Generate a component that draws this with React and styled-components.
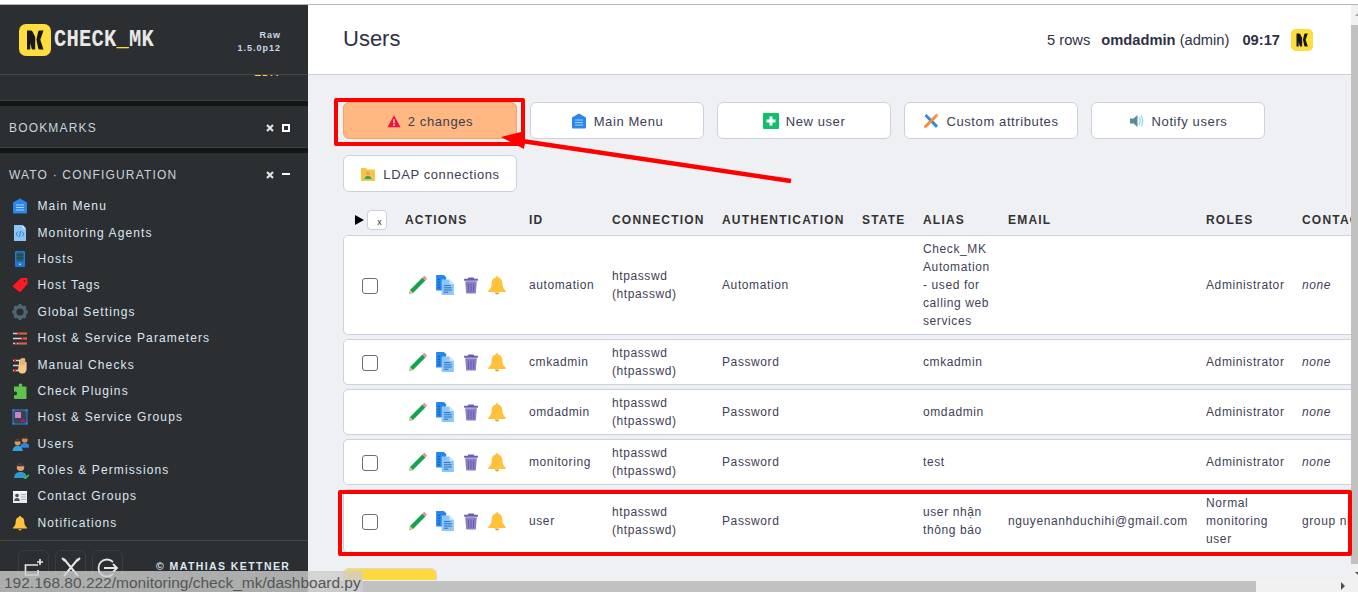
import React from 'react'
import styled, { createGlobalStyle } from 'styled-components'

const GlobalStyle = createGlobalStyle`
  html, body {
    margin: 0;
    padding: 0;
    overflow: hidden;
    background: #fff;
  }
  * { box-sizing: border-box; }
`

const Page = styled.div`
  position: relative;
  width: 1358px;
  height: 592px;
  overflow: hidden;
  display: flex;
  flex-direction: column;
  font-family: "Liberation Sans", Arial, sans-serif;
  background: #fff;
`

const TopEdge = styled.div`
  height: 5px;
  flex: none;
  border-bottom: 1px solid #b5b5b5;
  background: #fff;
`

const Body = styled.div`
  flex: 1;
  min-height: 0;
  display: flex;
`

/* sidebar */
const Sidebar = styled.aside`
  width: 308px;
  flex: none;
  display: flex;
  flex-direction: column;
  background: #2b2f31;
  color: #dfe7f0;
`

const Brand = styled.div`
  height: 70px;
  flex: none;
  display: flex;
  align-items: center;
  padding: 0 27px 0 19px;
  border-bottom: 1px solid #43484a;
`

const BrandName = styled.div`
  margin-left: 3px;
  font-family: "Liberation Mono", monospace;
  font-weight: 700;
  font-size: 20.5px;
  letter-spacing: 0.2px;
  color: #e8e8e8;
  transform: scaleY(1.15);
  span { color: #ffd83d; }
`

const Version = styled.div`
  margin-left: auto;
  padding-top: 4px;
  text-align: right;
  font-size: 9px;
  font-weight: 700;
  line-height: 13px;
  letter-spacing: 1px;
  color: #cdd8e4;
`

const SnapinTail = styled.div`
  height: 26px;
  flex: none;
  overflow: hidden;
  display: flex;
  justify-content: flex-end;
  padding-right: 27px;
  border-bottom: 1px solid #3b4042;
`

const EditLabel = styled.span`
  margin-top: -8px;
  height: 12px;
  font-size: 10px;
  font-weight: 700;
  letter-spacing: 1px;
  color: #ffd83d;
`

const Gap = styled.div`
  height: 5px;
  flex: none;
  background: #131617;
`

const SnapinHead = styled.div`
  height: ${p => p.$h}px;
  flex: none;
  display: flex;
  align-items: center;
  padding: ${p => p.$top}px 18px 0 9px;
  font-size: 12px;
  letter-spacing: 1.17px;
  color: #c9d4dd;
  border-bottom: ${p => (p.$line ? '1px solid #3b4042' : 'none')};
`

const HeadControls = styled.div`
  margin-left: auto;
  display: flex;
  align-items: center;
  gap: 8px;
`

const NavList = styled.div`
  display: flex;
  flex-direction: column;
`

const NavItem = styled.div`
  height: 26.4px;
  flex: none;
  display: flex;
  align-items: center;
  gap: 9.5px;
  padding-left: 12px;
  font-size: 12px;
  letter-spacing: 1.12px;
  color: #dde6f0;
`

const NavIcon = styled.span`
  width: 16px;
  flex: none;
  display: flex;
`

const Foot = styled.div`
  margin-top: 4px;
  flex: 1;
  min-height: 0;
  display: flex;
  gap: 6px;
  padding: 9px 18px 0;
  border-top: 1px solid #43484a;
`

const FootButton = styled.div`
  width: 31px;
  height: 36px;
  flex: none;
  display: flex;
  align-items: center;
  justify-content: center;
  border: 1px solid #383d3f;
  border-radius: 6px;
`

const Copyright = styled.div`
  margin-left: 27px;
  padding-top: 10px;
  font-size: 10.5px;
  font-weight: 700;
  letter-spacing: 1.42px;
  white-space: nowrap;
  color: #dfe7f0;
`

/* main */
const Main = styled.main`
  flex: 1;
  min-width: 0;
  display: flex;
  flex-direction: column;
`

const MainHead = styled.header`
  height: 70px;
  flex: none;
  display: flex;
  align-items: center;
  padding: 0 38px 0 35px;
  background: #fff;
  border-bottom: 1px solid #ccced9;
  color: #2f3147;
`

const Title = styled.h1`
  margin: 0 0 2px;
  font-size: 22px;
  font-weight: 400;
`

const HeadInfo = styled.div`
  margin-left: auto;
  display: flex;
  align-items: center;
  font-size: 14.7px;
  white-space: nowrap;
  b { font-weight: 700; }
`

const Rows = styled.span`
  margin-right: 11px;
`

const Clock = styled.b`
  margin: 0 11px 0 13px;
`

const Content = styled.div`
  flex: 1;
  min-height: 0;
  overflow: hidden;
  padding: 27px 0 0 35px;
  background: #eff0f3;
`

const Toolbar = styled.div`
  width: 935px;
  display: flex;
  flex-wrap: wrap;
  gap: 16px 13px;
`

const ToolButton = styled.div`
  width: 174px;
  height: 37px;
  display: flex;
  align-items: center;
  justify-content: center;
  gap: 7px;
  padding-top: 1px;
  font-size: 13px;
  letter-spacing: 0.6px;
  white-space: nowrap;
  color: #3c3e55;
  background: ${p => (p.$warn ? '#ffb881' : '#fff')};
  border: 1px solid ${p => (p.$warn ? '#f5a262' : '#cdd0e0')};
  border-radius: 6px;
`

const Table = styled.div`
  margin-top: 17px;
  width: 1059px;
  display: flex;
  flex-direction: column;
  gap: 4px;
`

const HeadRow = styled.div`
  height: 21px;
  display: grid;
  grid-template-columns: 62px 124px 83px 110px 140px 61px 85px 198px 96px 100px;
  align-items: center;
  margin-bottom: 1px;
  font-size: 12px;
  font-weight: 700;
  letter-spacing: 1.2px;
  color: #333;
`

const Expand = styled.div`
  display: flex;
  align-items: center;
  gap: 3px;
  padding-left: 12px;
`

const ClearBox = styled.div`
  width: 20px;
  height: 20px;
  display: flex;
  align-items: flex-end;
  justify-content: center;
  padding: 0 0 1px 5px;
  font-size: 9px;
  font-weight: 400;
  letter-spacing: 0;
  line-height: 12px;
  background: #fff;
  border: 1px solid #cdd0e0;
  border-radius: 4px;
`

const Row = styled.div`
  display: grid;
  grid-template-columns: 61px 124px 83px 110px 140px 61px 85px 198px 96px 100px;
  align-items: center;
  padding: 4px 0;
  font-size: 12px;
  line-height: 18px;
  letter-spacing: 0.6px;
  color: #3f4156;
  background: #fff;
  border: 1px solid #cdd0e0;
  border-radius: 5px;
`

const Cell = styled.div`
  padding-right: 12px;
  font-style: ${p => (p.$italic ? 'italic' : 'normal')};
  white-space: ${p => (p.$nowrap ? 'nowrap' : 'normal')};
`

const Check = styled.div`
  width: 16px;
  height: 16px;
  margin: 2px 0 0 18px;
  border: 1px solid #6d6d6d;
  border-radius: 3px;
  background: #fff;
`

const Actions = styled.div`
  display: flex;
  align-items: center;
  gap: 7px;
  padding-left: 3px;
`

const YellowButton = styled.div`
  margin-top: 15px;
  width: 94px;
  height: 40px;
  background: #ffd93f;
  border: 1px solid #d6d8e2;
  border-radius: 6px;
`

const HScroll = styled.div`
  height: 12px;
  flex: none;
  display: flex;
  align-items: center;
  background: #f1f1f1;
`

const HThumb = styled.div`
  width: 948px;
  height: 11px;
  background: #c1c1c1;
`

const ArrowRight = styled.div`
  margin-left: 85px;
  width: 0;
  height: 0;
  border-left: 4px solid #505050;
  border-top: 4px solid transparent;
  border-bottom: 4px solid transparent;
`

const VScroll = styled.div`
  width: 7px;
  flex: none;
  display: flex;
  flex-direction: column;
  align-items: flex-end;
  background: #f1f1f1;
`

const VArrow = styled.div`
  margin-top: ${p => p.$top}px;
  width: 0;
  height: 0;
  border-left: 3px solid transparent;
  border-right: 0 solid transparent;
  border-bottom: ${p => (p.$up ? '3px solid #a3a3a3' : '0 solid transparent')};
  border-top: ${p => (p.$up ? '0 solid transparent' : '3px solid #505050')};
`

const VThumb = styled.div`
  margin-top: 9px;
  width: 7px;
  height: 539px;
  background: #c1c1c1;
`

/* things lying over the page */
const StatusBubble = styled.div`
  position: absolute;
  left: 0;
  bottom: 0;
  height: 21px;
  padding: 0 2px 0 4px;
  font-size: 15.5px;
  line-height: 23px;
  white-space: nowrap;
  color: #555;
  background: rgba(205, 205, 205, 0.8);
  border-top-right-radius: 3px;
`

const RedBox = styled.div`
  position: absolute;
  left: ${p => p.$x}px;
  top: ${p => p.$y}px;
  width: ${p => p.$w}px;
  height: ${p => p.$h}px;
  border: 4px solid #fe0000;
  border-radius: 2px;
`

const ArrowLayer = styled.svg`
  position: absolute;
  left: 0;
  top: 0;
  pointer-events: none;
`

/* drawings */
const Mark = ({ size }) => (
  <svg width={size} height={size} viewBox="0 0 32 32">
    <rect width="32" height="32" rx="7" fill="#ffdd3f" />
    <path d="M8 6.500h3.600c1 0 1.600.4 2 1.300l2.600 5.200V25.500h-2.200c-.8 0-1.200-.4-1.400-1l-1.400-5.600V24.800c0 .4-.2.700-.6.700H8z" fill="#16181a" />
    <path d="M24.500 6.500h-3.800c-.8 0-1.200.4-1.500 1l-1.800 8.300 1.900 8.700c.2.700.7 1 1.400 1h3.800l-3.200-9.700z" fill="#16181a" />
  </svg>
)

const Ico = ({ size = 16, box = 16, children }) => (
  <svg width={size} height={size} viewBox={`0 0 ${box} ${box}`} style={{ flex: 'none' }}>{children}</svg>
)

const MenuIcon = () => (
  <Ico>
    <path d="M8 .5 15 4.500v9.500c0 1-.6 1.500-1.500 1.500h-11C1.600 15.500 1 15 1 14V4.500z" fill="#2b87ec" />
    <path d="M4 7h8M4 9.500h8M4 12h8" stroke="#a8d2fb" strokeWidth="1" />
  </Ico>
)

const AgentIcon = () => (
  <Ico>
    <path d="M2 0h8.500L14 3.500V16H2z" fill="#8cc4f8" />
    <path d="M10.500 0 14 3.500h-3.500z" fill="#d4e9fc" />
    <path d="M6 6.500 4 9l2 2.500M10 6.500 12 9l-2 2.500M8.700 6 7.300 12" stroke="#2f7fd6" strokeWidth="1" fill="none" />
  </Ico>
)

const HostIcon = () => (
  <Ico>
    <rect x="3" y="0" width="10" height="16" rx="1" fill="#1f79d8" />
    <rect x="4.500" y="1.500" width="7" height="9" fill="#2b5c6e" />
    <path d="M4.500 4h7M4.500 7h7" stroke="#1c3d4a" strokeWidth="1" />
    <circle cx="8" cy="13.300" r=".8" fill="#e7f2fd" />
  </Ico>
)

const TagIcon = () => (
  <Ico>
    <path d="M9 1h5.500c.6 0 1 .4 1 1v5l-6.800 7.800c-.4.400-1 .4-1.400 0L1 10c-.4-.4-.4-1 0-1.400z" fill="#fb1a26" />
    <circle cx="12.500" cy="4" r="1" fill="#8e0d14" />
  </Ico>
)

const GearIcon = () => (
  <Ico>
    <circle cx="8" cy="8" r="5.300" fill="none" stroke="#4e6772" strokeWidth="3.400" />
    <path d="M8 0v3M8 13v3M0 8h3M13 8h3M2.300 2.300l2.200 2.200M11.500 11.500l2.200 2.200M13.700 2.300l-2.200 2.200M4.500 11.500l-2.200 2.200" stroke="#4e6772" strokeWidth="2.600" />
  </Ico>
)

const SlidersIcon = () => (
  <Ico>
    <path d="M1 3.500h14M1 8.500h14M1 13.500h14" stroke="#d4d4d4" strokeWidth="1.500" />
    <path d="M7 3.500h8M11 8.500h4M6 13.500h9" stroke="#f0542c" strokeWidth="1.500" />
    <path d="M6.500 2v3M10.500 7v3M4 12v3" stroke="#d51f2c" strokeWidth="2" />
  </Ico>
)

const HandIcon = () => (
  <Ico size={18} box={18}>
    <path d="M1 4.500h8M1 9.500h8M1 14.500h8" stroke="#d4d4d4" strokeWidth="1.500" />
    <path d="M3 3v3M3 13v3" stroke="#d51f2c" strokeWidth="2" />
    <path d="M7 8.500V4.500c0-1 1.500-1 1.500 0V3c0-1 1.600-1 1.600 0v-.5c0-1 1.600-1 1.600 0v.6c0-1 1.500-1 1.500 0V6.500c0-.9 1.400-.9 1.400 0v6.500c0 2.500-1.500 4.500-4 4.500h-1c-2 0-3.600-2-3.600-4.500z" fill="#f7c68b" />
    <path d="M8.800 4.500v4.500M10.400 3.500v5.500M12 3.500v5.500" stroke="#cf9659" strokeWidth=".6" />
  </Ico>
)

const PuzzleIcon = () => (
  <Ico>
    <path d="M5 3.500h2c-.8-2 0-3 1.500-3S10.800 1.500 10 3.500h3.500c.6 0 1 .4 1 1V15c0 .6-.4 1-1 1H3c-.6 0-1-.4-1-1v-3c2 .8 3 0 3-1.500S4 8 2 8.800V4.500c0-.6.4-1 1-1z" fill="#61c34f" />
  </Ico>
)

const GroupsIcon = () => (
  <Ico>
    <rect x="1" y="1" width="14" height="14" fill="#3a4346" stroke="#2a6cb4" strokeWidth="1.400" />
    <rect x="3" y="3" width="6" height="6" fill="#cf7fd0" />
    <path d="M8 13h6l-3-4z" fill="#9a1c95" />
    <path d="M.5.500h2v2h-2zM13.500.500h2v2h-2zM.5 13.500h2v2h-2zM13.500 13.500h2v2h-2z" fill="#2f84e0" />
  </Ico>
)

const UsersIcon = () => (
  <Ico size={17}>
    <circle cx="12" cy="4.500" r="2.700" fill="#d98b4e" />
    <path d="M8.500 3.500c.5-2.500 6.500-2.500 7 0z" fill="#4b3527" />
    <path d="M7.500 12c0-3 2-4.500 4.500-4.500s4.500 1.500 4.500 4.500z" fill="#2b87d8" />
    <circle cx="5.300" cy="7" r="2.700" fill="#e09a5f" />
    <path d="M2 6c.5-2.500 6.500-2.500 7 0z" fill="#4b3527" />
    <path d="M.5 15c0-3 2-5 4.800-5s4.800 2 4.800 5z" fill="#30a2e6" />
  </Ico>
)

const RolesIcon = () => (
  <Ico size={17}>
    <circle cx="8" cy="5" r="3.500" fill="#e8a16a" />
    <path d="M4.300 4c.4-4 7-4 7.400 0z" fill="#3b3b3b" />
    <path d="M2 15c0-4 2.800-5.500 6-5.500s6 1.500 6 5.500z" fill="#2a9ad6" />
    <path d="M10.500 13.500l2 2 3.500-3.500" stroke="#3fb350" strokeWidth="1.600" fill="none" />
  </Ico>
)

const ContactIcon = () => (
  <Ico>
    <path d="M1 3h14v12H1z" fill="#e7ebee" />
    <path d="M1 3h14v1.500H1z" fill="#fff" />
    <circle cx="5" cy="7.500" r="1.800" fill="#4a4d50" />
    <path d="M2.300 13c0-2.200 1-3 2.700-3s2.700.8 2.700 3z" fill="#4a4d50" />
    <path d="M9 6.500h5M9 9h5M9 11.500h5" stroke="#aab4bc" strokeWidth="1" />
  </Ico>
)

const BellIcon = ({ size = 16 }) => (
  <Ico size={size}>
    <path d="M8 1c.7 0 1 .4 1 1 2.500.6 3.300 2.600 3.300 5 0 2.700 1 4 2.700 5.500V13.500H1v-1C2.700 11 3.700 9.700 3.700 7c0-2.400.8-4.400 3.300-5 0-.6.3-1 1-1z" fill="#ffc23a" />
    <path d="M6.300 14h3.400c-.2 1-.9 1.600-1.700 1.600s-1.500-.6-1.700-1.600z" fill="#e09a1f" />
  </Ico>
)

const PencilIcon = () => (
  <Ico size={20} box={18}>
    <path d="M1.800 13.500 13 2.300l2.700 2.700L4.500 16.200 1 17z" fill="#16a34f" />
    <path d="M13 2.300l1-1c.4-.4 1-.4 1.400 0l1.300 1.300c.4.4.4 1 0 1.400l-1 1z" fill="#ef8d9b" />
    <path d="M1.800 13.500l2.700 2.700L1 17z" fill="#e8c98d" />
  </Ico>
)

const CopyIcon = () => (
  <Ico size={20} box={18}>
    <path d="M1 0h7l2 2v12H1z" fill="#2487ea" />
    <path d="M6 4h7l4 4v10H6z" fill="#8dc7f7" />
    <path d="M13 4l4 4h-4z" fill="#cfe7fb" />
    <path d="M8 9.500h6M8 11.500h7M8 13.500h7M8 15.500h4" stroke="#2c6fc0" strokeWidth=".9" />
    <path d="M2.500 4h2M2.500 6.500h2M2.500 9h2M2.500 11.500h2" stroke="#0f5db3" strokeWidth=".9" />
  </Ico>
)

const TrashIcon = () => (
  <Ico size={18} box={17}>
    <path d="M6 1.500h5l.5 1H15V4.500H2V2.500h3.500z" fill="#6a5cb0" />
    <path d="M3 5h11l-1 11.500H4z" fill="#8a80c6" />
    <path d="M6 7v8M8.500 7v8M11 7v8" stroke="#6a5cb0" strokeWidth="1" />
  </Ico>
)

const WarnIcon = () => (
  <Ico size={14}>
    <path d="M8 1.500 15.500 15H.5z" fill="#f3123f" />
    <path d="M8 6v4.500M8 11.700v1.600" stroke="#fff" strokeWidth="1.500" />
  </Ico>
)

const PlusIcon = () => (
  <Ico>
    <rect width="16" height="16" rx="1" fill="#0cc169" />
    <path d="M8 3.500v9M3.500 8h9" stroke="#fff" strokeWidth="3" />
  </Ico>
)

const AttrIcon = () => (
  <Ico>
    <path d="M1.500 3 3.500 1 15 12.500 13 15z" fill="#2f8ae8" />
    <path d="M12.500 1.500 14.500 3.500 3.500 14.500 1 15l.5-2.500z" fill="#f58a31" />
    <path d="M12.500 1.500 13.500.5l2 2-1 1z" fill="#ef8d9b" />
  </Ico>
)

const SpeakerIcon = () => (
  <Ico>
    <path d="M1 5.500h3.500L8.500 2v12L4.500 10.500H1z" fill="#5e8a93" />
    <path d="M10 4c1.500 2.500 1.500 5.500 0 8M12 2.500c2.200 3.500 2.200 7.500 0 11" stroke="#8fd8f7" strokeWidth="1.400" fill="none" />
  </Ico>
)

const FolderIcon = () => (
  <Ico>
    <path d="M1 2h5l1.500 1.500H15V15H1z" fill="#f5c744" />
    <circle cx="8" cy="7.500" r="2" fill="#e8a16a" />
    <path d="M4.500 13c0-2 1.500-3 3.500-3s3.500 1 3.500 3z" fill="#2fa37c" />
  </Ico>
)

const CloseMark = () => (
  <svg width="8" height="8" viewBox="0 0 8 8">
    <path d="M1 1l6 6M7 1 1 7" stroke="#e2e2e2" strokeWidth="2.200" />
  </svg>
)

const BoxMark = () => (
  <svg width="8" height="8" viewBox="0 0 8 8">
    <rect x="1" y="1" width="6" height="6" fill="none" stroke="#fff" strokeWidth="2" />
  </svg>
)

const DashMark = () => (
  <svg width="8" height="8" viewBox="0 0 8 8">
    <rect y="2" width="8" height="2" fill="#fff" />
  </svg>
)

const navItems = [
  ['Main Menu', MenuIcon],
  ['Monitoring Agents', AgentIcon],
  ['Hosts', HostIcon],
  ['Host Tags', TagIcon],
  ['Global Settings', GearIcon],
  ['Host & Service Parameters', SlidersIcon],
  ['Manual Checks', HandIcon],
  ['Check Plugins', PuzzleIcon],
  ['Host & Service Groups', GroupsIcon],
  ['Users', UsersIcon],
  ['Roles & Permissions', RolesIcon],
  ['Contact Groups', ContactIcon],
  ['Notifications', BellIcon],
]

const buttons = [
  ['Main Menu', MenuIcon],
  ['New user', PlusIcon],
  ['Custom attributes', AttrIcon],
  ['Notify users', SpeakerIcon],
  ['LDAP connections', FolderIcon],
]

const users = [
  { id: 'automation', auth: 'Automation', alias: 'Check_MK Automation - used for calling web services', role: 'Administrator', contact: 'none', check: true },
  { id: 'cmkadmin', auth: 'Password', alias: 'cmkadmin', role: 'Administrator', contact: 'none', check: true },
  { id: 'omdadmin', auth: 'Password', alias: 'omdadmin', role: 'Administrator', contact: 'none' },
  { id: 'monitoring', auth: 'Password', alias: 'test', role: 'Administrator', contact: 'none', check: true },
  { id: 'user', auth: 'Password', alias: 'user nhận thông báo', email: 'nguyenanhduchihi@gmail.com', role: 'Normal monitoring user', contact: 'group nhận thông báo', plain: true, check: true },
]

const heads = ['ACTIONS', 'ID', 'CONNECTION', 'AUTHENTICATION', 'STATE', 'ALIAS', 'EMAIL', 'ROLES', 'CONTACT GROUPS']

export default function App() {
  return (
    <Page>
      <GlobalStyle />
      <TopEdge />
      <Body>
        <Sidebar>
          <Brand>
            <Mark size={32} />
            <BrandName>CHECK<span>_</span>MK</BrandName>
            <Version>Raw<br />1.5.0p12</Version>
          </Brand>
          <SnapinTail><EditLabel>EDIT</EditLabel></SnapinTail>
          <Gap />
          <SnapinHead $h={42} $top={3} $line>
            BOOKMARKS
            <HeadControls><CloseMark /><BoxMark /></HeadControls>
          </SnapinHead>
          <Gap />
          <SnapinHead $h={40} $top={4}>
            WATO · CONFIGURATION
            <HeadControls><CloseMark /><DashMark /></HeadControls>
          </SnapinHead>
          <NavList>
            {navItems.map(([label, Icon]) => (
              <NavItem key={label}><NavIcon><Icon /></NavIcon>{label}</NavItem>
            ))}
          </NavList>
          <Foot>
            <FootButton>
              <svg width="20" height="20" viewBox="0 0 20 20" fill="none" stroke="#e6e6e6" strokeWidth="1.700">
                <path d="M14 7H1.500v10h12.500v-5M16 1v6M13 4h6" />
              </svg>
            </FootButton>
            <FootButton>
              <svg width="20" height="22" viewBox="0 0 20 22" fill="none" stroke="#e6e6e6" strokeWidth="2">
                <path d="M3 2l14 17M17 2 3 19M1 1l3 3M19 1l-3 3" />
              </svg>
            </FootButton>
            <FootButton>
              <svg width="22" height="22" viewBox="0 0 22 22" fill="none" stroke="#e6e6e6" strokeWidth="1.800">
                <path d="M16 5A8.500 8.500 0 1 0 16 17M7 11h13M16 7l4 4-4 4" />
              </svg>
            </FootButton>
            <Copyright>© MATHIAS KETTNER</Copyright>
          </Foot>
        </Sidebar>
        <Main>
          <MainHead>
            <Title>Users</Title>
            <HeadInfo>
              <Rows>5 rows</Rows>
              <b>omdadmin</b>&nbsp;(admin)
              <Clock>09:17</Clock>
              <Mark size={22} />
            </HeadInfo>
          </MainHead>
          <Content>
            <Toolbar>
              <ToolButton $warn><WarnIcon />2 changes</ToolButton>
              {buttons.map(([label, Icon]) => (
                <ToolButton key={label}><Icon />{label}</ToolButton>
              ))}
            </Toolbar>
            <Table>
              <HeadRow>
                <Expand>
                  <svg width="9" height="10" viewBox="0 0 9 10"><path d="M0 0l9 5-9 5z" fill="#000" /></svg>
                  <ClearBox>x</ClearBox>
                </Expand>
                {heads.map(h => <Cell key={h} $nowrap>{h}</Cell>)}
              </HeadRow>
              {users.map(u => (
                <Row key={u.id}>
                  <div>{u.check && <Check />}</div>
                  <Actions>
                    <PencilIcon /><CopyIcon /><TrashIcon /><BellIcon size={20} />
                  </Actions>
                  <Cell>{u.id}</Cell>
                  <Cell>htpasswd (htpasswd)</Cell>
                  <Cell>{u.auth}</Cell>
                  <Cell />
                  <Cell>{u.alias}</Cell>
                  <Cell $nowrap>{u.email}</Cell>
                  <Cell>{u.role}</Cell>
                  <Cell $italic={!u.plain} $nowrap>{u.contact}</Cell>
                </Row>
              ))}
            </Table>
            <YellowButton />
          </Content>
          <HScroll>
            <HThumb />
            <ArrowRight />
          </HScroll>
        </Main>
        <VScroll>
          <VArrow $up $top={8} />
          <VThumb />
          <VArrow $top={8} />
        </VScroll>
      </Body>
      <RedBox $x={334} $y={98} $w={191} $h={48} />
      <RedBox $x={338} $y={490} $w={1014} $h={66} />
      <ArrowLayer width="1358" height="592">
        <path d="M791 181 522 141" stroke="#fe0000" strokeWidth="4.500" />
        <path d="M501 137 525 131 524 149z" fill="#fe0000" />
      </ArrowLayer>
      <StatusBubble>192.168.80.222/monitoring/check_mk/dashboard.py</StatusBubble>
    </Page>
  )
}
